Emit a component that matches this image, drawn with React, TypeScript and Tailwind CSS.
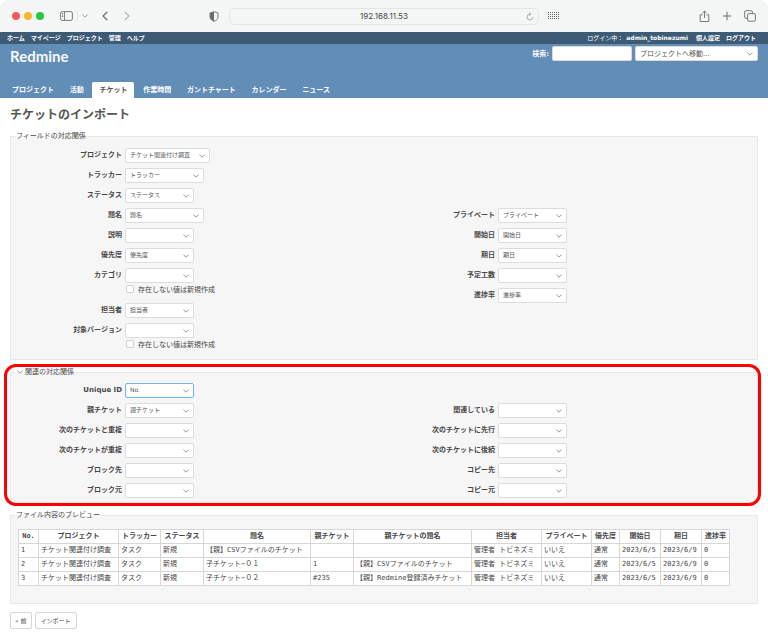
import { useId } from 'react';
import type { ReactNode } from 'react';
import { clsx } from 'clsx';

interface SelectProps {
  id?: string;
  value?: string;
  className?: string;
  focused?: boolean;
  label?: string;
}

function Chevron({ className }: { className?: string }) {
  return (
    <svg viewBox="0 0 8 6" className={clsx('h-[6px] w-[8px]', className)} fill="none" stroke="#8a8a8a" aria-hidden="true">
      <path d="M1.4 1.6 4 4.2 6.6 1.6" strokeWidth="0.9" />
    </svg>
  );
}

function Select({ id, value = '', className = 'w-[69px]', focused, label }: SelectProps) {
  return (
    <div className={clsx('relative shrink-0', className)}>
      <select
        id={id}
        aria-label={label}
        defaultValue={value}
        className={clsx(
          'block h-[15px] w-full appearance-none rounded-[2px] border bg-white pr-3 pl-1 text-[#555]',
          focused ? 'border-[#6fb7ea]' : 'border-[#dcdcdc]'
        )}
      >
        <option value={value}>{value}</option>
      </select>
      <Chevron className="pointer-events-none absolute top-[5px] right-1" />
    </div>
  );
}

interface FieldProps {
  label: string;
  value?: string;
  width?: string;
  focused?: boolean;
  creatable?: boolean;
}

function Field({ label, value, width, focused, creatable }: FieldProps) {
  const id = useId();

  return (
    <div className="text-[7px]">
      <div className="flex h-5 items-center gap-[3px]">
        <label htmlFor={id} className="w-[111px] shrink-0 text-right font-bold">
          {label}
        </label>
        <Select id={id} value={value} className={clsx('text-[6px]', width ?? 'w-[69px]')} focused={focused} />
      </div>
      {creatable && (
        <label className="ml-[115px] flex h-[15px] items-start gap-1">
          <input
            type="checkbox"
            className="size-2 appearance-none rounded-[2px] border border-[#d0d0d0] bg-white checked:bg-[#628db6]"
          />
          <span className="pt-px">存在しない値は新規作成</span>
        </label>
      )}
    </div>
  );
}

interface PanelProps {
  legend: ReactNode;
  className?: string;
  children: ReactNode;
}

function Panel({ legend, className, children }: PanelProps) {
  return (
    <fieldset className={clsx('min-w-0 border border-[#e8e8e8] bg-[#f6f6f6]', className)}>
      <legend className="ml-1 px-px text-[7px] leading-2">{legend}</legend>
      {children}
    </fieldset>
  );
}

function BrowserBar() {
  return (
    <div className="flex h-8 items-center rounded-t-lg bg-[#f4f6f5] px-3 text-[#6b6b6b]">
      <div className="flex flex-1 items-center">
        <div className="flex gap-1">
          <span className="size-2 rounded-full bg-[#fc5b57]" />
          <span className="size-2 rounded-full bg-[#fdb32b]" />
          <span className="size-2 rounded-full bg-[#27c840]" />
        </div>
        <button aria-label="サイドバー" className="ml-4">
          <svg viewBox="0 0 13 10" className="h-[10px] w-[13px]" fill="none" stroke="currentColor" strokeWidth="0.9">
            <rect x="0.6" y="0.6" width="11.8" height="8.8" rx="1.6" />
            <path d="M4.6 0.6v8.8M2 2.5h1.2M2 4h1.2M2 5.5h1.2" />
          </svg>
        </button>
        <span className="ml-1 h-3 w-px bg-[#e4e6e5]" />
        <Chevron className="ml-[3px]" />
        <button aria-label="戻る" className="ml-3">
          <svg viewBox="0 0 8 10" className="h-[10px] w-2" fill="none" stroke="currentColor" strokeWidth="1.2">
            <path d="M6.2 1 2 5l4.2 4" />
          </svg>
        </button>
        <button aria-label="進む" className="ml-[14px] text-[#b5b5b5]">
          <svg viewBox="0 0 8 10" className="h-[10px] w-2" fill="none" stroke="currentColor" strokeWidth="1.2">
            <path d="M1.8 1 6 5 1.8 9" />
          </svg>
        </button>
        <button aria-label="プライバシーレポート" className="mr-[10px] ml-auto">
          <svg viewBox="0 0 10 11" className="h-[11px] w-[10px]" fill="none" stroke="currentColor">
            <path d="M5 0.7 9 2v4c0 2-1.7 3.4-4 4.3C2.7 9.4 1 8 1 6V2Z" strokeWidth="0.9" />
            <path d="M5 0.7v9.6C2.7 9.4 1 8 1 6V2Z" fill="currentColor" stroke="none" />
          </svg>
        </button>
      </div>
      <div className="flex h-[17px] w-2/5 min-w-[310px] items-center rounded-[5px] border border-[#e3e5e4] px-1">
        <input
          aria-label="アドレス"
          defaultValue="192.168.11.53"
          className="min-w-0 flex-1 bg-transparent pl-2 text-center font-['Inter','Liberation_Sans',sans-serif] text-[8px] text-[#444]"
        />
        <button aria-label="再読み込み">
          <svg viewBox="0 0 8 9" className="h-[9px] w-2" fill="none" stroke="#999" strokeWidth="0.8">
            <path d="M4 2.1A2.9 2.9 0 1 0 6.9 5M3.2 0.5 5 2.1 3.3 3.7" />
          </svg>
        </button>
      </div>
      <div className="flex flex-1 items-center">
        <button aria-label="お気に入り" className="ml-[9px]">
          <svg viewBox="0 0 12 8" className="h-2 w-3" fill="#666" shapeRendering="crispEdges">
            {[0, 1, 2, 3].map((row) =>
              [0, 1, 2, 3, 4, 5].map((col) => (
                <rect key={`${row}-${col}`} x={col * 2} y={row * 2} width="1" height="1" />
              ))
            )}
          </svg>
        </button>
        <button aria-label="共有" className="ml-auto">
          <svg viewBox="0 0 11 13" className="h-[13px] w-[11px]" fill="none" stroke="currentColor" strokeWidth="0.9">
            <path d="M3.5 4.8H1.2v6.7h8.6V4.8H7.5M5.5 8V1.2M3.3 3.2 5.5 1l2.2 2.2" />
          </svg>
        </button>
        <button aria-label="新規タブ" className="ml-3">
          <svg viewBox="0 0 10 10" className="size-[10px]" fill="none" stroke="currentColor">
            <path d="M5 0.8v8.4M0.8 5h8.4" />
          </svg>
        </button>
        <button aria-label="タブ一覧" className="ml-3">
          <svg viewBox="0 0 12 12" className="size-3" fill="none" stroke="currentColor" strokeWidth="0.9">
            <rect x="3.6" y="3.6" width="7.8" height="7.6" rx="1.3" />
            <path d="M3.6 8.4H2A1.3 1.3 0 0 1 .7 7.1V2A1.3 1.3 0 0 1 2 .7h5.1A1.3 1.3 0 0 1 8.4 2v1.6" />
          </svg>
        </button>
      </div>
    </div>
  );
}

const topLinks = ['ホーム', 'マイページ', 'プロジェクト', '管理', 'ヘルプ'];
const tabs = ['プロジェクト', '活動', 'チケット', '作業時間', 'ガントチャート', 'カレンダー', 'ニュース'];

function Header() {
  return (
    <header className="text-white">
      <div className="flex h-3 items-center bg-[#3e5b76] pr-3 pl-[7px] text-[6px] font-bold">
        <nav className="flex gap-[6px]">
          {topLinks.map((link) => (
            <a key={link} href="#">
              {link}
            </a>
          ))}
        </nav>
        <div className="ml-auto flex">
          <span className="font-normal">ログイン中：</span>
          <a href="#" className="ml-[3px]">
            admin_tobinezumi
          </a>
          <a href="#" className="ml-2">
            個人設定
          </a>
          <a href="#" className="ml-[6px]">
            ログアウト
          </a>
        </div>
      </div>
      <div className="flex flex-col bg-[#628db6]">
        <div className="flex h-[38px] items-start justify-between px-[10px]">
          <h1 className="pt-[2px] font-['Lato','Open_Sans',sans-serif] text-[15px] leading-5 font-bold text-[#f8f8f8]">
            Redmine
          </h1>
          <div className="flex items-center gap-[3px] pt-[2px] text-[7px]">
            <label htmlFor="q" className="font-bold text-[#f8f8f8]">
              検索:
            </label>
            <input id="q" className="h-[15px] w-20 rounded-[2px] border border-[#dcdcdc] bg-white px-1 text-[#555]" />
            <Select label="プロジェクトへ移動" value="プロジェクトへ移動..." className="w-[123px]" />
          </div>
        </div>
        <nav className="ml-[5px] flex w-[332px] justify-between text-[7px] font-bold">
          {tabs.map((tab) => (
            <a
              key={tab}
              href="#"
              className={clsx(
                'flex h-4 items-center px-[7px] whitespace-nowrap',
                tab === 'チケット' && 'rounded-t-[2px] bg-white text-[#555]'
              )}
            >
              {tab}
            </a>
          ))}
        </nav>
      </div>
    </header>
  );
}

const columns = [
  { name: 'No.', width: 'w-[20px]' },
  { name: 'プロジェクト', width: 'w-[80px]' },
  { name: 'トラッカー', width: 'w-[42px]' },
  { name: 'ステータス', width: 'w-[43px]' },
  { name: '題名', width: 'w-[107px]' },
  { name: '親チケット', width: 'w-[43px]' },
  { name: '親チケットの題名', width: 'w-[118px]' },
  { name: '担当者', width: 'w-[70px]' },
  { name: 'プライベート', width: 'w-[50px]' },
  { name: '優先度', width: 'w-[28px]' },
  { name: '開始日', width: 'w-[41px]' },
  { name: '期日', width: 'w-[41px]' },
  { name: '進捗率', width: 'w-[28px]' },
];

const issues = [
  { subject: '【親】CSVファイルのチケット', parent: '', parentSubject: '' },
  { subject: '子チケット−０１', parent: '1', parentSubject: '【親】CSVファイルのチケット' },
  { subject: '子チケット−０２', parent: '#235', parentSubject: '【親】Redmine登録済みチケット' },
];

function PreviewTable() {
  return (
    <table className="ml-[7px] table-fixed border-collapse bg-white font-['DejaVu_Sans_Mono','Noto_Sans_CJK_JP',monospace] text-[7px] leading-[13px] whitespace-nowrap">
      <thead>
        <tr>
          {columns.map(({ name, width }) => (
            <th key={name} className={clsx('border border-[#d7d7d7] p-0 text-center font-bold', width)}>
              {name}
            </th>
          ))}
        </tr>
      </thead>
      <tbody>
        {issues.map((issue, i) => (
          <tr key={issue.subject}>
            {[
              String(i + 1),
              'チケット関連付け調査',
              'タスク',
              '新規',
              issue.subject,
              issue.parent,
              issue.parentSubject,
              '管理者 トビネズミ',
              'いいえ',
              '通常',
              '2023/6/5',
              '2023/6/9',
              '0',
            ].map((cell, col) => (
              <td key={col} className="border border-[#d7d7d7] py-0 pr-0 pl-[2px]">
                {cell}
              </td>
            ))}
          </tr>
        ))}
      </tbody>
    </table>
  );
}

export default function App() {
  return (
    <div className="min-h-screen bg-white font-['DejaVu_Sans','Noto_Sans_CJK_JP',sans-serif] text-[7px] leading-2 text-[#484848]">
      <BrowserBar />
      <Header />
      <main className="px-[10px] pt-[9px]">
        <h2 className="mb-[9px] text-[12px] leading-4 font-bold text-[#555]">チケットのインポート</h2>

        <form onSubmit={(e) => e.preventDefault()}>
          <Panel legend="フィールドの対応関係" className="pt-[5px] pb-1">
            <Field label="プロジェクト" value="チケット関連付け調査" width="w-[85px]" />
            <Field label="トラッカー" value="トラッカー" width="w-[79px]" />
            <Field label="ステータス" value="ステータス" />
            <div className="grid grid-cols-2">
              <div>
                <Field label="題名" value="題名" width="w-[79px]" />
                <Field label="説明" />
                <Field label="優先度" value="優先度" />
                <Field label="カテゴリ" creatable />
                <Field label="担当者" value="担当者" />
                <Field label="対象バージョン" creatable />
              </div>
              <div>
                <Field label="プライベート" value="プライベート" />
                <Field label="開始日" value="開始日" />
                <Field label="期日" value="期日" />
                <Field label="予定工数" />
                <Field label="進捗率" value="進捗率" />
              </div>
            </div>
          </Panel>

          <div className="relative mt-2">
            <Panel
              className="pt-1 pb-[2px]"
              legend={
                <button type="button" className="flex items-center gap-px">
                  <Chevron />
                  関連の対応関係
                </button>
              }
            >
              <Field label="Unique ID" value="No." focused />
              <div className="grid grid-cols-2">
                <div>
                  <Field label="親チケット" value="親チケット" />
                  <Field label="次のチケットと重複" />
                  <Field label="次のチケットが重複" />
                  <Field label="ブロック先" />
                  <Field label="ブロック元" />
                </div>
                <div>
                  <Field label="関連している" />
                  <Field label="次のチケットに先行" />
                  <Field label="次のチケットに後続" />
                  <Field label="コピー先" />
                  <Field label="コピー元" />
                </div>
              </div>
            </Panel>
            {/* highlight frame */}
            <div className="pointer-events-none absolute -top-1 -right-[3px] -bottom-[3px] -left-[6px] rounded-[12px] border-3 border-[#fe0000]" />
          </div>

          <Panel legend="ファイル内容のプレビュー" className="mt-2 pt-[10px] pb-[17px]">
            <PreviewTable />
          </Panel>

          <div className="mt-2 flex gap-[3px] text-[6px]">
            <button className="h-[17px] rounded-[2px] border border-[#d7d7d7] px-1">« 前</button>
            <button className="h-[17px] rounded-[2px] border border-[#d7d7d7] px-[5px]">インポート</button>
          </div>
        </form>
      </main>
    </div>
  );
}
